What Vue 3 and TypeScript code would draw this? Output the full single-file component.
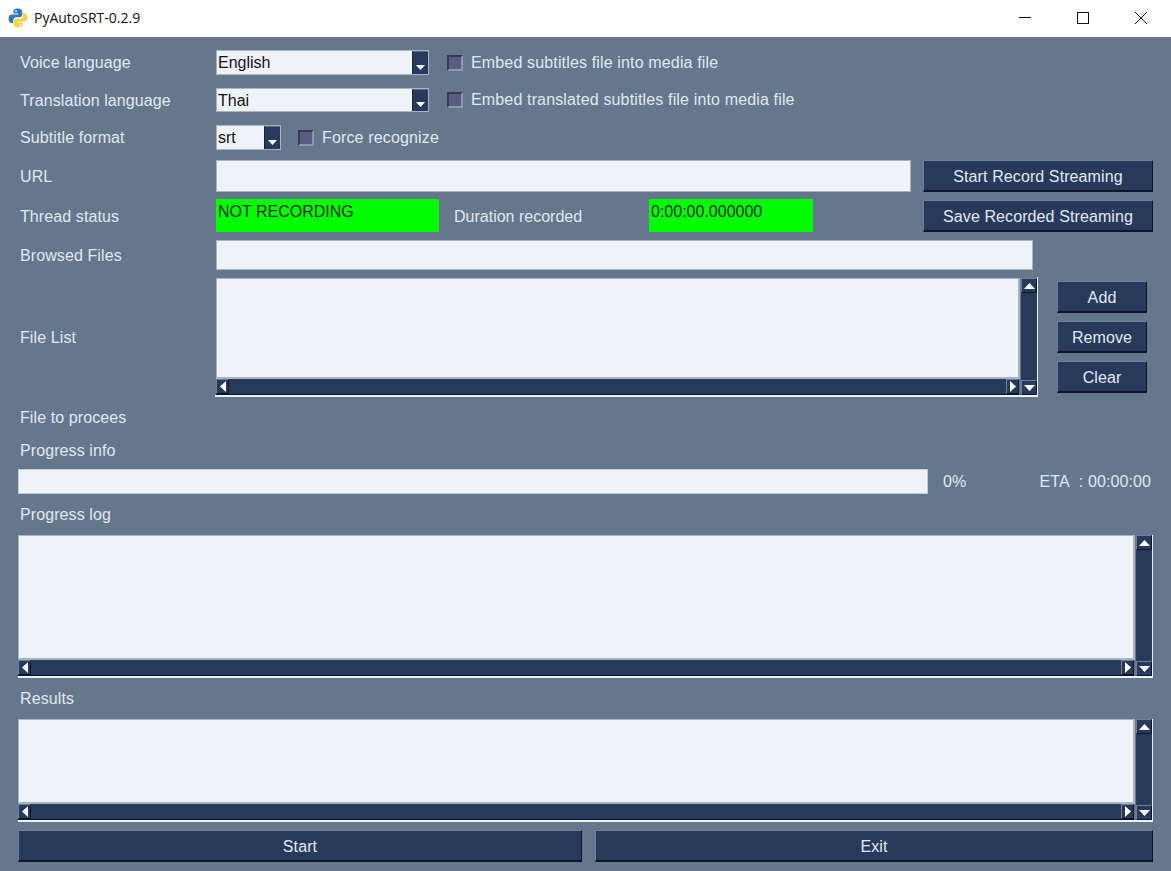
<script setup lang="ts">
interface Row {
  key: string
  label: string
  height: number
}

const logs: Row[] = [
  { key: 'log', label: 'Progress log', height: 143 },
  { key: 'results', label: 'Results', height: 103 },
]
</script>

<template>
  <div class="window">
    <header class="titlebar">
      <svg class="app-icon" viewBox="0 0 20 20" width="20" height="20">
        <path fill="#2f79bb" d="M9.600 .6C6.800 .6 5.400 1.800 5.400 3.600V5.400H10V6.400H3.600C1.600 6.400 .6 8 .6 10.400C.6 13 1.800 15 3.600 15H5.200V12.600C5.200 10.400 6.800 9.200 8.600 9.200H11.400C13 9.200 14.200 8 14.200 6.400V3.600C14.200 1.800 12.400 .6 9.600 .6Z" />
        <path fill="#fad24a" d="M10.400 19.400C13.200 19.400 14.600 18.200 14.600 16.400V14.600H10V13.600H16.400C18.400 13.600 19.400 12 19.400 9.600C19.400 7 18.200 5 16.400 5H14.800V7.400C14.800 9.600 13.200 10.800 11.400 10.800H8.600C7 10.800 5.800 12 5.800 13.600V16.400C5.800 18.200 7.600 19.400 10.400 19.400Z" />
        <circle cx="8" cy="3.200" r=".9" fill="#fff" />
        <circle cx="12" cy="16.800" r=".9" fill="#fff" />
      </svg>
      <span class="app-title">PyAutoSRT-0.2.9</span>
      <div class="win-controls">
        <svg viewBox="0 0 12 12" width="12" height="12"><path d="M0 5.500H12" stroke="#111" fill="none" /></svg>
        <svg viewBox="0 0 12 12" width="12" height="12"><rect x=".5" y=".5" width="11" height="11" stroke="#111" fill="none" /></svg>
        <svg viewBox="0 0 12 12" width="12" height="12"><path d="M0 0L12 12M12 0L0 12" stroke="#111" fill="none" /></svg>
      </div>
    </header>

    <main class="body">
      <div class="row row-voice">
        <span class="label">Voice language</span>
        <div class="combo combo-wide">
          <span class="combo-value">English</span>
          <span class="combo-btn"><svg viewBox="0 0 9 5" width="9" height="5"><path d="M0 0H9L4.500 5Z" fill="#fff" /></svg></span>
        </div>
        <span class="check"></span>
        <span class="check-text">Embed subtitles file into media file</span>
      </div>

      <div class="row row-trans">
        <span class="label label-low">Translation language</span>
        <div class="combo combo-wide">
          <span class="combo-value">Thai</span>
          <span class="combo-btn"><svg viewBox="0 0 9 5" width="9" height="5"><path d="M0 0H9L4.500 5Z" fill="#fff" /></svg></span>
        </div>
        <span class="check"></span>
        <span class="check-text">Embed translated subtitles file into media file</span>
      </div>

      <div class="row row-format">
        <span class="label">Subtitle format</span>
        <div class="combo combo-small">
          <span class="combo-value">srt</span>
          <span class="combo-btn"><svg viewBox="0 0 9 5" width="9" height="5"><path d="M0 0H9L4.500 5Z" fill="#fff" /></svg></span>
        </div>
        <span class="check check-small"></span>
        <span class="check-text">Force recognize</span>
      </div>

      <div class="row row-url">
        <span class="label label-low">URL</span>
        <div class="field field-url"></div>
        <button class="btn btn-stream">Start Record Streaming</button>
      </div>

      <div class="row row-thread">
        <span class="label label-low">Thread status</span>
        <div class="status status-thread">NOT RECORDING</div>
        <span class="duration-label">Duration recorded</span>
        <div class="status status-time">0:00:00.000000</div>
        <button class="btn btn-stream btn-save">Save Recorded Streaming</button>
      </div>

      <div class="row row-browsed">
        <span class="label label-low">Browsed Files</span>
        <div class="field field-browsed"></div>
      </div>

      <div class="row row-list">
        <span class="label label-low">File List</span>
        <div class="scrollbox listbox">
          <div class="scroll-text"></div>
          <div class="vbar">
            <span class="arrow"><svg viewBox="0 0 11 6" width="11" height="6"><path d="M0 6H11L5.500 0Z" fill="#fff" /></svg></span>
            <span class="arrow"><svg viewBox="0 0 11 6" width="11" height="6"><path d="M0 0H11L5.500 6Z" fill="#fff" /></svg></span>
          </div>
          <div class="hbar">
            <span class="arrow"><svg viewBox="0 0 6 11" width="6" height="11"><path d="M6 0V11L0 5.500Z" fill="#fff" /></svg></span>
            <span class="arrow"><svg viewBox="0 0 6 11" width="6" height="11"><path d="M0 0V11L6 5.500Z" fill="#fff" /></svg></span>
          </div>
        </div>
        <div class="list-actions">
          <button class="btn">Add</button>
          <button class="btn">Remove</button>
          <button class="btn">Clear</button>
        </div>
      </div>

      <div class="line line-process">File to procees</div>
      <div class="line line-info">Progress info</div>

      <div class="row row-progress">
        <div class="progress"></div>
        <span class="percent">0%</span>
        <span class="eta">ETA&nbsp; : 00:00:00</span>
      </div>

      <template v-for="item in logs" :key="item.key">
        <div class="line line-log">{{ item.label }}</div>
        <div class="scrollbox logbox" :style="{ height: item.height + 'px' }">
          <div class="scroll-text"></div>
          <div class="vbar">
            <span class="arrow"><svg viewBox="0 0 11 6" width="11" height="6"><path d="M0 6H11L5.500 0Z" fill="#fff" /></svg></span>
            <span class="arrow"><svg viewBox="0 0 11 6" width="11" height="6"><path d="M0 0H11L5.500 6Z" fill="#fff" /></svg></span>
          </div>
          <div class="hbar">
            <span class="arrow"><svg viewBox="0 0 6 11" width="6" height="11"><path d="M6 0V11L0 5.500Z" fill="#fff" /></svg></span>
            <span class="arrow"><svg viewBox="0 0 6 11" width="6" height="11"><path d="M0 0V11L6 5.500Z" fill="#fff" /></svg></span>
          </div>
        </div>
      </template>

      <div class="row row-bottom">
        <button class="btn btn-start">Start</button>
        <button class="btn btn-exit">Exit</button>
      </div>
    </main>
  </div>
</template>

<style>
html,
body {
  margin: 0;
  background: #64778d;
}
</style>

<style scoped>
.window {
  width: 1171px;
  height: 871px;
  overflow: hidden;
  background: #64778d;
  font-family: "Liberation Sans", Arial, sans-serif;
  font-size: 16px;
  color: #e2e8f0;
}

.titlebar {
  display: flex;
  align-items: center;
  height: 37px;
  padding-left: 8px;
  box-sizing: border-box;
  background: #fff;
}

.app-icon {
  margin-right: 6px;
  margin-top: -2px;
}

.app-title {
  font-family: "Open Sans", sans-serif;
  font-size: 14px;
  color: #111;
  margin-top: -2px;
}

.win-controls {
  display: flex;
  gap: 46px;
  margin-left: auto;
  margin-right: 23px;
  margin-top: -2px;
  transform: translateX(-1px);
}

.body {
  padding: 13px 18px 0;
}

.row {
  display: flex;
  align-items: center;
}

.label {
  flex: none;
  width: 198px;
  padding-left: 2px;
  box-sizing: border-box;
  letter-spacing: 0.1px;
}

.label-low {
  padding-top: 2px;
}

.line {
  padding-left: 2px;
  letter-spacing: 0.1px;
}

.row-voice {
  height: 25px;
}

.row-trans {
  height: 24px;
  margin-top: 13px;
}

.row-format {
  height: 25px;
  margin-top: 13px;
}

.row-url {
  height: 32px;
  margin-top: 10px;
}

.row-thread {
  height: 33px;
  margin-top: 7px;
}

.row-browsed {
  height: 30px;
  margin-top: 8px;
}

.row-list {
  height: 120px;
  margin-top: 7px;
}

.combo {
  display: flex;
  flex: none;
  height: 100%;
  box-sizing: border-box;
  background: #eff3f8;
  border: 1px solid #a9b4c2;
  color: #111;
}

.combo-wide {
  width: 213px;
}

.combo-small {
  width: 65px;
}

.combo-value {
  flex: 1;
  padding-left: 1px;
  line-height: 24px;
}

.combo-btn {
  display: flex;
  align-items: flex-end;
  justify-content: center;
  width: 16px;
  padding-bottom: 4px;
  box-sizing: border-box;
  background: #283a5c;
  border-top: 1px solid #5a6c86;
  border-left: 1px solid #1a2438;
}

.check {
  flex: none;
  width: 16px;
  height: 16px;
  margin-left: 18px;
  box-sizing: border-box;
  background: #5b5b82;
  border: 2px solid;
  border-color: #333d4b #8d9aab #8d9aab #333d4b;
}

.check-small {
  margin-left: 17px;
}

.check-text {
  margin-left: 8px;
  letter-spacing: 0.15px;
}

.field {
  flex: none;
  height: 100%;
  box-sizing: border-box;
  background: #eff3f8;
  border: 1px solid #a9b4c2;
}

.field-url {
  width: 695px;
  margin-right: 12px;
}

.field-browsed {
  width: 817px;
}

.btn {
  display: block;
  padding: 2px 0 0;
  box-sizing: border-box;
  background: #283a5c;
  color: #e2e8f0;
  font: inherit;
  letter-spacing: 0.1px;
  border: 2px solid;
  border-color: #6e7f96 #0e1626 #0e1626 #6e7f96;
  border-width: 1px 1px 2px 1px;
}

.btn-stream {
  flex: none;
  width: 230px;
  height: 32px;
}

.btn-save {
  margin-left: auto;
  margin-top: 1px;
  margin-right: 0;
}

.status {
  flex: none;
  box-sizing: border-box;
  height: 100%;
  padding-left: 2px;
  line-height: 26px;
  background: #00ff00;
  color: #0a2a0a;
}

.status-thread {
  width: 223px;
}

.status-time {
  width: 164px;
}

.duration-label {
  flex: none;
  width: 210px;
  padding: 2px 0 0 15px;
  box-sizing: border-box;
}

.scrollbox {
  display: grid;
  grid-template-columns: 1fr 16px;
  grid-template-rows: 1fr 16px;
  box-sizing: border-box;
  border-right: 1px solid #eef1f6;
  border-bottom: 2px solid #eef1f6;
}

.listbox {
  flex: none;
  width: 823px;
  height: 100%;
  margin-left: -1px;
  padding-left: 1px;
  padding-top: 1px;
}

.logbox {
  width: 1135px;
}

.scroll-text {
  background: #eff3f8;
  border-top: 1px solid #a9b4c2;
  border-left: 1px solid #a9b4c2;
  border-right: 2px solid #a9b4c2;
  border-bottom: 2px solid #a9b4c2;
  margin-right: 1px;
}

.vbar {
  grid-row: 1 / 3;
  grid-column: 2;
  display: flex;
  flex-direction: column;
  justify-content: space-between;
  background: #283a5c;
}

.hbar {
  grid-row: 2;
  grid-column: 1;
  display: flex;
  justify-content: space-between;
  margin-right: 2px;
  background: #283a5c;
  border-bottom: 1px solid #0e1626;
}

.arrow {
  display: flex;
  align-items: center;
  justify-content: center;
  flex: none;
  width: 16px;
  height: 15px;
  box-sizing: border-box;
  background: #283a5c;
  border: 1px solid;
  border-color: #6e7f96 #0e1626 #0e1626 #6e7f96;
}

.hbar .arrow {
  width: 13px;
  height: 15px;
}

.list-actions {
  display: flex;
  flex-direction: column;
  gap: 8px;
  margin-left: 19px;
}

.list-actions .btn {
  width: 90px;
  height: 32px;
}

.line-process {
  margin-top: 12px;
  line-height: 18px;
}

.line-info {
  margin-top: 15px;
  line-height: 18px;
}

.row-progress {
  height: 25px;
  margin-top: 9px;
}

.progress {
  flex: none;
  width: 910px;
  height: 100%;
  box-sizing: border-box;
  background: #eff3f8;
  border: 1px solid #c3ccd8;
}

.percent {
  margin-left: 15px;
  letter-spacing: 0.1px;
}

.eta {
  margin-left: auto;
  margin-right: 2px;
  letter-spacing: 0.1px;
}

.line-log {
  margin-top: 12px;
  line-height: 18px;
  margin-bottom: 11px;
}

.row-bottom {
  height: 32px;
  margin-top: 8px;
  gap: 13px;
}

.btn-start {
  width: 564px;
  height: 100%;
}

.btn-exit {
  width: 558px;
  height: 100%;
}
</style>
